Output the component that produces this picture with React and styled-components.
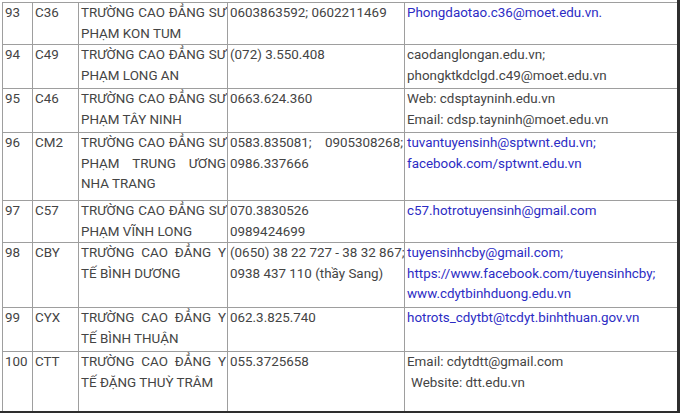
import React from "react";
import styled, { createGlobalStyle } from "styled-components";

const GlobalStyle = createGlobalStyle`
  html, body {
    margin: 0;
    padding: 0;
    background: #ffffff;
  }
`;

const Page = styled.div`
  box-sizing: border-box;
  width: 680px;
  height: 413px;
  overflow: hidden;
  padding: 2px 0 0 2px;
  border-right: 3px solid #2e2e2e;
  border-bottom: 2px solid #2e2e2e;
  background: #fff;
`;

const Table = styled.table`
  width: 675px;
  table-layout: fixed;
  border-collapse: collapse;
  font-family: Roboto, "Liberation Sans", Arial, sans-serif;
  font-size: 13.4px;
  line-height: 20.5px;
  color: #444444;
`;

const Row = styled.tr`
  height: ${(p) => p.h}px;
`;

const Cell = styled.td`
  border: 1px solid #9e9e9e;
  padding: 0 1px 0 2px;
  vertical-align: top;
  text-align: ${(p) => (p.justify ? "justify" : "left")};
  white-space: ${(p) => (p.nowrap ? "nowrap" : "normal")};
  overflow: hidden;
`;

const Link = styled.span`
  color: #2c2cc4;
`;

const Line = styled.div`
  white-space: nowrap;
  padding-left: ${(p) => (p.indent ? "4px" : "0")};
`;

const rows = [
  {
    no: "93",
    code: "C36",
    name: "TRƯỜNG CAO ĐẲNG SƯ PHẠM KON TUM",
    phone: ["0603863592; 0602211469"],
    h: 42,
    contact: [{ t: "Phongdaotao.c36@moet.edu.vn.", link: true }],
  },
  {
    no: "94",
    code: "C49",
    name: "TRƯỜNG CAO ĐẲNG SƯ PHẠM LONG AN",
    phone: ["(072) 3.550.408"],
    h: 44,
    contact: [{ t: "caodanglongan.edu.vn;" }, { t: "phongktkdclgd.c49@moet.edu.vn" }],
  },
  {
    no: "95",
    code: "C46",
    name: "TRƯỜNG CAO ĐẲNG SƯ PHẠM TÂY NINH",
    phone: ["0663.624.360"],
    h: 44,
    contact: [{ t: "Web: cdsptayninh.edu.vn" }, { t: "Email: cdsp.tayninh@moet.edu.vn" }],
  },
  {
    no: "96",
    code: "CM2",
    name: "TRƯỜNG CAO ĐẲNG SƯ PHẠM TRUNG ƯƠNG NHA TRANG",
    phone: ["0583.835081; 0905308268; 0986.337666"],
    h: 68,
    contact: [
      { t: "tuvantuyensinh@sptwnt.edu.vn;", link: true },
      { t: "facebook.com/sptwnt.edu.vn", link: true },
    ],
  },
  {
    no: "97",
    code: "C57",
    name: "TRƯỜNG CAO ĐẲNG SƯ PHẠM VĨNH LONG",
    phone: ["070.3830526", "0989424699"],
    h: 42,
    contact: [{ t: "c57.hotrotuyensinh@gmail.com", link: true }],
  },
  {
    no: "98",
    code: "CBY",
    name: "TRƯỜNG CAO ĐẲNG Y TẾ BÌNH DƯƠNG",
    phone: ["(0650) 38 22 727 - 38 32 867;", "0938 437 110 (thầy Sang)"],
    h: 65,
    contact: [
      { t: "tuyensinhcby@gmail.com;", link: true },
      { t: "https://www.facebook.com/tuyensinhcby;", link: true },
      { t: "www.cdytbinhduong.edu.vn", link: true },
    ],
  },
  {
    no: "99",
    code: "CYX",
    name: "TRƯỜNG CAO ĐẲNG Y TẾ BÌNH THUẬN",
    phone: ["062.3.825.740"],
    h: 44,
    contact: [{ t: "hotrots_cdytbt@tcdyt.binhthuan.gov.vn", link: true }],
  },
  {
    no: "100",
    code: "CTT",
    name: "TRƯỜNG CAO ĐẲNG Y TẾ ĐẶNG THUỲ TRÂM",
    phone: ["055.3725658"],
    h: 60,
    contact: [{ t: "Email: cdytdtt@gmail.com" }, { t: "Website: dtt.edu.vn", indent: true }],
  },
];

export default function App() {
  return (
    <>
      <GlobalStyle />
      <Page>
        <Table>
          <colgroup>
            <col style={{ width: 30 }} />
            <col style={{ width: 46 }} />
            <col style={{ width: 149 }} />
            <col style={{ width: 177 }} />
            <col style={{ width: 273 }} />
          </colgroup>
          <tbody>
            {rows.map((r) => (
              <Row key={r.no} h={r.h}>
                <Cell>{r.no}</Cell>
                <Cell>{r.code}</Cell>
                <Cell justify>{r.name}</Cell>
                <Cell justify={r.phone.length === 1} nowrap={r.phone.length > 1}>
                  {r.phone.map((p, i) => (
                    <React.Fragment key={p}>
                      {i > 0 && <br />}
                      {p}
                    </React.Fragment>
                  ))}
                </Cell>
                <Cell>
                  {r.contact.map((c) => (
                    <Line key={c.t} indent={c.indent}>
                      {c.link ? <Link>{c.t}</Link> : c.t}
                    </Line>
                  ))}
                </Cell>
              </Row>
            ))}
          </tbody>
        </Table>
      </Page>
    </>
  );
}
